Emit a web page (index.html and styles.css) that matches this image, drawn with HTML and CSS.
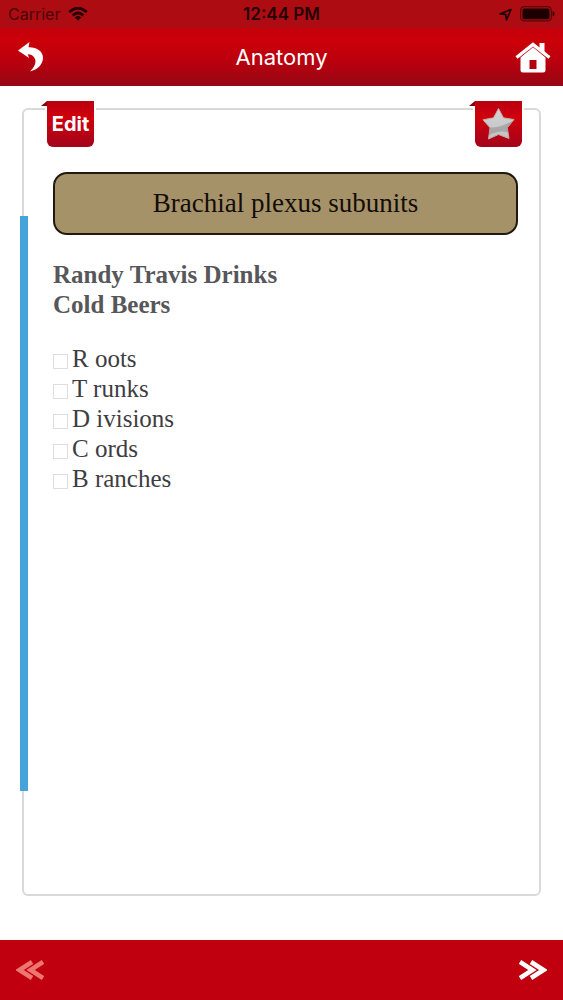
FILE: index.html
```html
<!DOCTYPE html>
<html lang="en">
<head>
<meta charset="utf-8">
<meta name="viewport" content="width=device-width, initial-scale=1">
<title>Anatomy</title>
<link rel="stylesheet" href="styles.css">
</head>
<body>
<div class="status">
  <div class="status-side">
    <span>Carrier</span>
    <svg class="wifi" viewBox="0 0 20 14" aria-hidden="true"><g fill="none" stroke="currentColor" stroke-width="2.7"><path d="M1.2 5Q10-2.8 18.8 5"/><path d="M4.6 8.4Q10 3.6 15.4 8.4"/></g><path d="M6.9 10.4Q10 7.7 13.1 10.4L10 13.7Z" fill="currentColor"/></svg>
  </div>
  <span class="clock">12:44 PM</span>
  <div class="status-side status-end">
    <svg class="locate" viewBox="0 0 13 13" aria-hidden="true"><path d="M1 6L12 1.500 7.500 12 6.600 6.400Z" fill="none" stroke="currentColor" stroke-width="1.600" stroke-linejoin="round"/></svg>
    <svg class="battery" viewBox="0 0 35 16" aria-hidden="true"><rect x=".7" y=".7" width="30.6" height="14.2" rx="3" fill="none" stroke="currentColor" stroke-width=".7"/><rect x="2.5" y="2.6" width="27" height="10.6" rx="1.5" fill="currentColor"/><path d="M32.7 5.3Q34.5 6 34.5 7.9T32.7 10.5Z" fill="currentColor"/></svg>
  </div>
</div>
<header class="nav">
  <button class="icon-button" aria-label="Back"><svg class="back" viewBox="0 0 26 30" aria-hidden="true"><path d="M0 8.500L11.500 0 10.500 5.200C19 5 25.200 9.500 25 16 24.800 22.500 20 27.500 12 29.500 16.500 25 18.500 20.500 17 17 15.800 13.800 13.500 12.300 9.800 12.200L11 16Z" fill="currentColor"/></svg></button>
  <h1 class="nav-title">Anatomy</h1>
  <button class="icon-button" aria-label="Home"><svg class="home" viewBox="0 0 36 31" aria-hidden="true"><path d="M1.500 15.500L18 2.500 34.500 15.500" fill="none" stroke="currentColor" stroke-width="3.400"/><path d="M24.500 1H29.500V10L24.500 6Z" fill="currentColor"/><path fill="currentColor" fill-rule="evenodd" d="M5.500 15.500L18 5.300 30.500 15.500V28Q30.500 30.500 28 30.500H8Q5.500 30.500 5.500 28ZM14.500 18H21.500V27H14.500Z"/></svg></button>
</header>
<main class="page">
  <article class="card">
    <div class="ribbons">
      <button class="ribbon">Edit</button>
      <button class="ribbon" aria-label="Favourite"><svg class="star" viewBox="0 0 34 34" aria-hidden="true"><defs><linearGradient id="silver" x2="0" y2="1"><stop offset="0" stop-color="#d4d4d4"/><stop offset="1" stop-color="#c2c2c2"/></linearGradient></defs><path d="M16.500 1.500L21.500 10.800 32 12.500 25.300 20.800 27 31.500 16.500 27.500 6.500 32 8 20.800 1 12.800 11.500 10.800Z" fill="url(#silver)" stroke="#c2a9a9" stroke-width="1" stroke-linejoin="round"/><path d="M8 20.500Q18 21 31 13.500L25.300 20.800 26 25Q16 23 7 28Z" fill="#888" opacity=".5"/></svg></button>
    </div>
    <h2 class="topic">Brachial plexus subunits</h2>
    <p class="mnemonic">Randy Travis Drinks<br>Cold Beers</p>
    <ul class="items">
      <li><label class="item"><input class="tick" type="checkbox">R oots</label></li>
      <li><label class="item"><input class="tick" type="checkbox">T runks</label></li>
      <li><label class="item"><input class="tick" type="checkbox">D ivisions</label></li>
      <li><label class="item"><input class="tick" type="checkbox">C ords</label></li>
      <li><label class="item"><input class="tick" type="checkbox">B ranches</label></li>
    </ul>
  </article>
</main>
<footer class="pager">
  <button class="icon-button" aria-label="Previous" disabled><svg class="chevrons faded" viewBox="0 0 28 20" aria-hidden="true"><path d="M16 2L3.500 10 16 18M27 2L14.500 10 27 18" fill="none" stroke="currentColor" stroke-width="4.500"/></svg></button>
  <button class="icon-button" aria-label="Next"><svg class="chevrons" viewBox="0 0 28 20" aria-hidden="true"><path d="M1 2L13.500 10 1 18M12 2L24.500 10 12 18" fill="none" stroke="currentColor" stroke-width="4.500"/></svg></button>
</footer>
</body>
</html>
```
FILE: styles.css
```css
* { box-sizing: border-box; }
body {
  margin: 0;
  min-height: 100vh;
  display: flex;
  flex-direction: column;
  background: #fff;
  font-family: Inter, "Liberation Sans", sans-serif;
}
button {
  border: 0;
  padding: 0;
  background: none;
  color: #fff;
  font: inherit;
}
svg { display: block; }
.status {
  display: flex;
  align-items: center;
  height: 28px;
  padding: 0 8px;
  background: #ad0c12;
  color: #250204;
  font-size: 16px;
}
.status-side {
  flex: 1;
  display: flex;
  align-items: center;
  gap: 8px;
  color: #4a0508;
}
.status-end { justify-content: flex-end; color: #1c0001; }
.clock { font-size: 17px; font-weight: 600; }
.wifi { width: 20px; height: 14px; color: #250204; }
.locate { width: 13px; height: 13px; }
.battery { width: 35px; height: 16px; }
.nav {
  display: flex;
  align-items: center;
  justify-content: space-between;
  height: 58px;
  padding: 0 12px;
  background: linear-gradient(#c4000c, #cb0009 25%, #b8000e 60%, #960714);
  color: #fff;
}
.nav-title {
  margin: 0;
  font-size: 22px;
  font-weight: 400;
}
.icon-button {
  display: flex;
  align-items: center;
  width: 36px;
  height: 44px;
}
.icon-button:last-child { justify-content: flex-end; }
.back { width: 26px; height: 30px; margin-left: 6px; }
.home { width: 36px; height: 31px; }
.page {
  flex: 1;
  display: flex;
  padding: 22px 22px 44px;
}
.card {
  position: relative;
  flex: 1;
  padding: 62px 21px 32px 29px;
  border: 2px solid #d9d9d9;
  border-radius: 6px;
  color: #3d3d42;
  font-family: "Liberation Serif", serif;
  font-size: 25px;
  line-height: 30px;
}
.card::before {
  content: "";
  position: absolute;
  top: 106px;
  bottom: 103px;
  left: -4px;
  width: 8px;
  background: #45a4da;
}
.ribbons {
  position: absolute;
  top: -9px;
  left: 23px;
  right: 17px;
  display: flex;
  justify-content: space-between;
}
.ribbon {
  position: relative;
  display: flex;
  align-items: center;
  justify-content: center;
  width: 47px;
  height: 46px;
  border-radius: 0 0 6px 6px;
  background: linear-gradient(#b80010, #d0000c 35%, #a3041a);
  box-shadow: 0 0 0 2px #fff;
  font: 700 20px/24px Inter, sans-serif;
}
.ribbon::before {
  content: "";
  position: absolute;
  top: 0;
  left: -6px;
  border-left: 6px solid transparent;
  border-bottom: 5px solid #85000c;
}
.star { width: 34px; height: 34px; }
.topic {
  margin: 0 0 25px;
  padding: 15px 16px;
  border: 2px solid #20190f;
  border-radius: 14px;
  background: #a69268;
  color: #120d08;
  font-size: 27px;
  font-weight: 400;
  line-height: 29px;
  text-align: center;
}
.mnemonic {
  margin: 0 0 24px;
  color: #57575a;
  font-weight: 700;
}
.items {
  margin: 0;
  padding: 0;
  list-style: none;
}
.item { display: flex; align-items: center; gap: 4px; }
.tick {
  appearance: none;
  width: 15px;
  height: 15px;
  margin: 5px 0 0;
  border: 1px solid #dedee0;
  background: #fff;
}
.pager {
  display: flex;
  align-items: center;
  justify-content: space-between;
  height: 60px;
  padding: 0 16px;
  background: #c0000e;
}
.chevrons { width: 28px; height: 20px; }
.faded { color: #ed7770; }
```
